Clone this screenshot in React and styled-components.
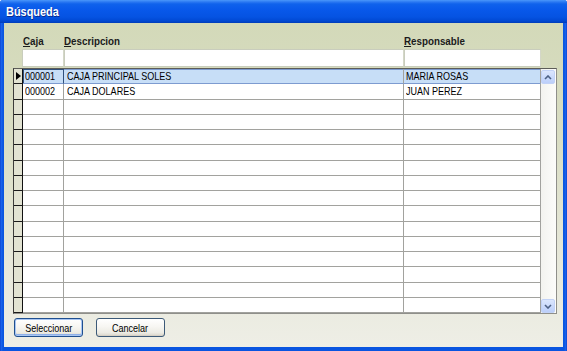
import React from "react";
import styled, { createGlobalStyle } from "styled-components";

const SANS = `"Liberation Sans", Arial, sans-serif`;

const GlobalStyle = createGlobalStyle`
  html, body { margin: 0; padding: 0; background: #ffffff; }
  body { width: 567px; height: 351px; overflow: hidden; }
`;

const HEAD_COLS = "9px 42px 340px 137px";
const ROW_COLS = "9px 41px 340px 137px";

/* Tahoma-like narrow rendering of Liberation Sans */
const Txt = styled.span`
  display: inline-block;
  white-space: nowrap;
  transform: scaleX(${(p) => p.$sx || 0.82});
  transform-origin: ${(p) => p.$origin || "left"} center;
`;

const Window = styled.div`
  width: 567px;
  height: 351px;
  box-sizing: border-box;
  display: flex;
  flex-direction: column;
  background: #0b4ddb;
  border-radius: 3px 3px 0 0;
  overflow: hidden;
`;

const TitleBar = styled.div`
  height: 23px;
  flex: none;
  display: flex;
  align-items: center;
  padding-left: 6px;
  background: linear-gradient(
    to bottom,
    #4a97fb 0px,
    #2a78f2 2px,
    #0f62ec 4px,
    #0858ea 10px,
    #0553e2 17px,
    #0048d2 21px,
    #003cb8 23px
  );
  font: bold 13px ${SANS};
  color: #ffffff;
  text-shadow: 1px 1px 0 #0a2a8e;
`;

const Frame = styled.div`
  flex: 1;
  min-height: 0;
  display: flex;
  padding: 0 4px 4px;
  background: linear-gradient(
    to right,
    #0838c8 0,
    #1c66ee 1px,
    #0a55e0 3px,
    #0a55e0 calc(100% - 3px),
    #1c66ee calc(100% - 1px),
    #0838c8 100%
  );
`;

const Client = styled.div`
  flex: 1;
  display: flex;
  flex-direction: column;
  padding: 9px 6px 10px 9px;
  background: linear-gradient(to bottom, #d3d9b9 0%, #d9ddc3 35%, #e6e7d8 70%, #eeeee6 100%);
  font: 11px ${SANS};
  color: #000;
`;

const HeaderRow = styled.div`
  display: grid;
  grid-template-columns: ${HEAD_COLS};
  height: 17px;
`;

const Label = styled.div`
  font: bold 11px ${SANS};
  line-height: 18px;
  color: #1b1b1b;
  padding-left: ${(p) => p.$pad || 0}px;
  u {
    text-decoration-thickness: 1px;
    text-underline-offset: 1px;
  }
`;

const FilterRow = styled.div`
  display: grid;
  grid-template-columns: ${HEAD_COLS};
  height: 19px;
`;

const FilterInput = styled.input`
  box-sizing: border-box;
  height: 18px;
  margin: 0;
  border: 1px solid #c9cdbd;
  border-right-color: #d4d7c8;
  background: #ffffff;
  outline: none;
`;

const GridBox = styled.div`
  display: flex;
  height: 246px;
  box-sizing: border-box;
  border: 1px solid #8f8f8a;
  border-top-color: #5c5c58;
  border-left-color: #3c3c3a;
  background: #ffffff;
`;

const Table = styled.div`
  display: grid;
  grid-template-rows: repeat(16, 1fr);
  width: 527px;
`;

const Row = styled.div`
  display: grid;
  grid-template-columns: ${ROW_COLS};
  min-height: 0;
`;

const Indicator = styled.div`
  box-sizing: border-box;
  background: #e2e3d2;
  border-right: 1px solid #111;
  border-bottom: 1px solid #1a1a1a;
  display: flex;
  align-items: center;
  justify-content: center;
`;

const Cell = styled.div`
  box-sizing: border-box;
  padding-left: ${(p) => p.$pad}px;
  border-right: 1px solid #a2a29e;
  border-bottom: 1px solid #a2a29e;
  background: ${(p) => (p.$selected ? "#c7def7" : "#ffffff")};
  white-space: nowrap;
  overflow: hidden;
  line-height: 15px;
  ${(p) => p.$selected && `border-bottom-color: #7d9bd0; box-shadow: inset 0 1px 0 #7d9bd0;`}
  ${(p) =>
    p.$focus &&
    `border-right-color: #30507c; box-shadow: inset 0 1px 0 #30507c, inset 1px 0 0 #30507c;`}
`;

const ScrollBar = styled.div`
  width: 15px;
  display: flex;
  flex-direction: column;
  justify-content: space-between;
  background: linear-gradient(to right, #f3f3ef, #fcfcfa);
  padding: 1px 0 0 0;
`;

const ScrollBtn = styled.div`
  width: 14px;
  height: 14px;
  box-sizing: border-box;
  border: 1px solid #c2d2f6;
  border-radius: 2px;
  background: linear-gradient(to bottom, #dbe6fd, #bccffa);
  display: flex;
  align-items: center;
  justify-content: center;
`;

const ButtonRow = styled.div`
  display: flex;
  gap: 13px;
  margin-top: 4px;
  padding-left: 1px;
`;

const Button = styled.button`
  width: 69px;
  height: 19px;
  box-sizing: border-box;
  padding: 0;
  border: 1px solid ${(p) => (p.$default ? "#1f4f8f" : "#3c5a78")};
  border-radius: 3px;
  background: linear-gradient(to bottom, #ffffff 0%, #f7f6f2 45%, #ecebe4 80%, #d9d5ca 100%);
  font: 11px ${SANS};
  color: #000;
  display: flex;
  align-items: center;
  justify-content: center;
  box-shadow: ${(p) =>
    p.$default
      ? "inset 0 0 0 1px #a9c6f2, inset 0 -1px 0 1px #8fb0e8"
      : "inset 0 -1px 0 #d6d0c5"};
`;

const rows = [
  { caja: "000001", desc: "CAJA PRINCIPAL SOLES", resp: "MARIA ROSAS" },
  { caja: "000002", desc: "CAJA DOLARES", resp: "JUAN PEREZ" },
];
while (rows.length < 16) rows.push({ caja: "", desc: "", resp: "" });

const Arrow = ({ down }) => (
  <svg width="8" height="5" viewBox="0 0 8 5">
    <path
      d={down ? "M1 1 L4 4 L7 1" : "M1 4 L4 1 L7 4"}
      fill="none"
      stroke="#4d6185"
      strokeWidth="1.6"
    />
  </svg>
);

export default function App() {
  return (
    <>
      <GlobalStyle />
      <Window>
        <TitleBar>
          <Txt $sx={0.84}>Búsqueda</Txt>
        </TitleBar>
        <Frame>
          <Client>
            <HeaderRow>
              <span />
              <Label $pad={1}>
                <Txt $sx={0.89}>
                  <u>C</u>aja
                </Txt>
              </Label>
              <Label $pad={0}>
                <Txt $sx={0.89}>
                  <u>D</u>escripcion
                </Txt>
              </Label>
              <Label $pad={0}>
                <Txt $sx={0.89}>
                  <u>R</u>esponsable
                </Txt>
              </Label>
            </HeaderRow>
            <FilterRow>
              <span />
              <FilterInput aria-label="Caja" />
              <FilterInput aria-label="Descripcion" />
              <FilterInput aria-label="Responsable" />
            </FilterRow>
            <GridBox>
              <Table>
                {rows.map((r, i) => {
                  const sel = i === 0;
                  return (
                    <Row key={i}>
                      <Indicator>
                        {sel && (
                          <svg width="5" height="8" viewBox="0 0 5 8">
                            <polygon points="0,0 5,4 0,8" fill="#000" />
                          </svg>
                        )}
                      </Indicator>
                      <Cell $pad={2} $selected={sel} $focus={sel}>
                        <Txt>{r.caja}</Txt>
                      </Cell>
                      <Cell $pad={3} $selected={sel}>
                        <Txt>{r.desc}</Txt>
                      </Cell>
                      <Cell $pad={2} $selected={sel}>
                        <Txt>{r.resp}</Txt>
                      </Cell>
                    </Row>
                  );
                })}
              </Table>
              <ScrollBar>
                <ScrollBtn>
                  <Arrow />
                </ScrollBtn>
                <ScrollBtn>
                  <Arrow down />
                </ScrollBtn>
              </ScrollBar>
            </GridBox>
            <ButtonRow>
              <Button $default>
                <Txt $origin="center">Seleccionar</Txt>
              </Button>
              <Button>
                <Txt $origin="center">Cancelar</Txt>
              </Button>
            </ButtonRow>
          </Client>
        </Frame>
      </Window>
    </>
  );
}
